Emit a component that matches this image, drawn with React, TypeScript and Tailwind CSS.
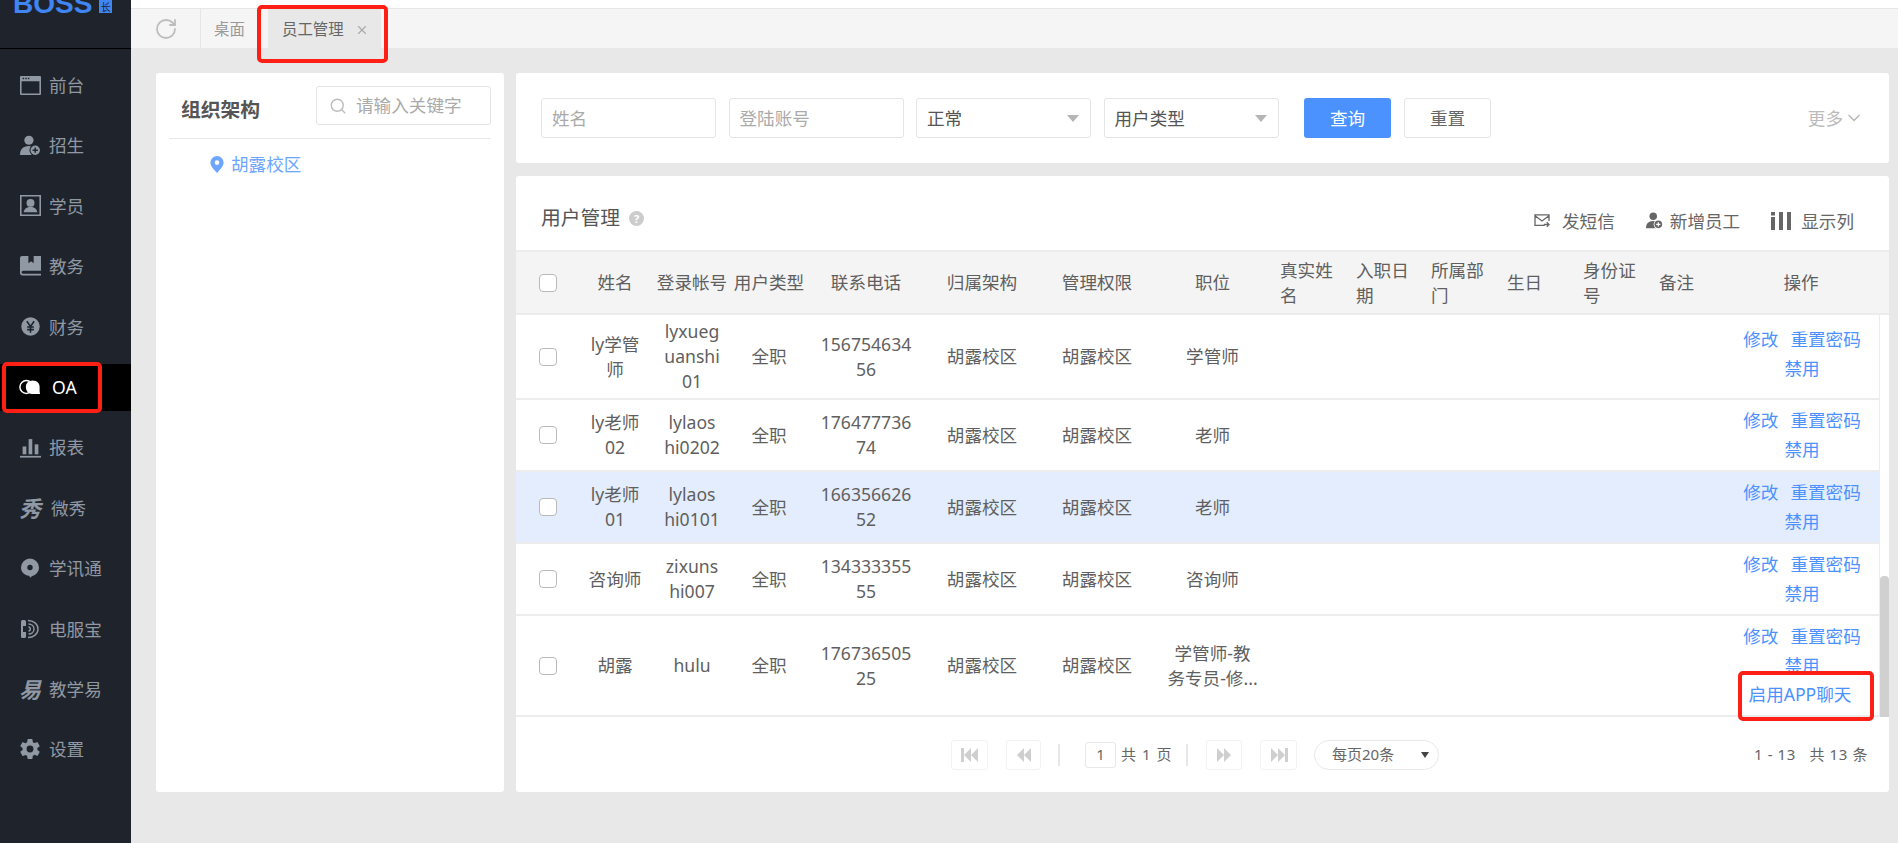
import React from 'react';
import { IoSettingsSharp } from 'react-icons/io5';
import { X, ChevronDown, Search, RotateCw } from 'lucide-react';

const fontStack = 'font-["Noto_Sans","Noto_Sans_CJK_SC",sans-serif]';

const IconWindow = () => (
  <svg viewBox="0 0 20 20" className="size-[21px]" fill="currentColor">
    <path d="M1 1h18a1 1 0 0 1 1 1v16a1 1 0 0 1-1 1H1a1 1 0 0 1-1-1V2a1 1 0 0 1 1-1zm.5 5v11.5h17V6z" fillRule="evenodd" />
    <rect x="2.5" y="2.6" width="1.4" height="1.4" fill="#1f242c" />
    <rect x="5" y="2.6" width="1.4" height="1.4" fill="#1f242c" />
    <rect x="7.5" y="2.6" width="1.4" height="1.4" fill="#1f242c" />
  </svg>
);

const IconUserPlus = ({ bg = '#1f242c' }: { bg?: string }) => (
  <svg viewBox="0 0 20 20" className="size-[21px]" fill="currentColor">
    <circle cx="8.5" cy="5" r="4.4" />
    <path d="M0 19c0-5 2.500-8.500 8.500-8.500S17 14 17 19z" />
    <circle cx="14.500" cy="14.500" r="5.500" fill={bg} />
    <circle cx="14.500" cy="14.500" r="4.500" />
    <path d="M14.500 12v5M12 14.500h5" stroke={bg} strokeWidth="1.400" />
  </svg>
);

const IconPortrait = () => (
  <svg viewBox="0 0 20 20" className="size-[21px]" fill="currentColor">
    <path d="M0 0h20v20H0zm1.500 1.500v17h17v-17z" fillRule="evenodd" />
    <circle cx="10" cy="7.500" r="3.800" />
    <path d="M3.500 16.500c.5-3.500 3-5 6.500-5s6 1.500 6.500 5z" />
  </svg>
);

const IconBook = () => (
  <svg viewBox="0 0 20 20" className="size-[21px]" fill="currentColor">
    <path d="M2 0h18v14H3a1.500 1.500 0 0 0 0 3h17v1.500H2.500A2.500 2.500 0 0 1 0 16V2a2 2 0 0 1 2-2z" />
    <path d="M8 0h5v7l-2.500-2L8 7z" fill="#1f242c" />
  </svg>
);

const IconYen = () => (
  <svg viewBox="0 0 20 20" className="size-[21px]" fill="currentColor">
    <circle cx="10" cy="10" r="8.800" />
    <path d="M6.500 5l3.500 5 3.500-5M10 10v6M6.800 10.500h6.400M6.800 13h6.400" stroke="#1f242c" strokeWidth="1.500" fill="none" />
  </svg>
);

const IconChat = () => (
  <svg viewBox="0 0 24 18" className="h-[18px] w-[24px]">
    <ellipse cx="8" cy="9" rx="7" ry="7" fill="none" stroke="#fff" strokeWidth="1.600" />
    <path d="M15 2c4.500 0 7.500 3 7.500 7 0 2.500-.2 5.500.5 7.500H14c-4 0-6.500-3.500-6.500-7.500S10.500 2 15 2z" fill="#fff" />
  </svg>
);

const IconBars = () => (
  <svg viewBox="0 0 20 20" className="size-[21px]" fill="currentColor">
    <rect x="2.500" y="9" width="3.500" height="7.500" />
    <rect x="8.200" y="2" width="3.500" height="14.500" />
    <rect x="14" y="7" width="3.500" height="9.500" />
    <rect x="0" y="18" width="20" height="1.600" />
  </svg>
);

const IconBubble = () => (
  <svg viewBox="0 0 20 20" className="size-[20px]" fill="currentColor">
    <path d="M10 .5a9 9 0 0 1 9 9c0 4.500-3.500 8-7 8.500l-1.500 1.800-1.500-2C4 17 1 13.800 1 9.500a9 9 0 0 1 9-9zm0 6.300a2.700 2.700 0 1 0 0 5.400 2.700 2.700 0 0 0 0-5.400z" fillRule="evenodd" />
  </svg>
);

const IconPhoneWave = () => (
  <svg viewBox="0 0 20 20" className="size-[20px]" fill="none" stroke="currentColor">
    <rect x="1" y="1" width="5" height="18" rx="1.500" fill="currentColor" stroke="none" />
    <path d="M3 7h3.500v6H3z" fill="#1f242c" stroke="none" />
    <path d="M8 1.500c5.500 0 10 3.500 10 8.500s-4.500 8.500-10 8.500" strokeWidth="1.400" />
    <path d="M8.500 5c3 0 5.500 2 5.500 5s-2.500 5-5.500 5" strokeWidth="1.400" />
    <path d="M8.500 8c1 0 1.800.8 1.800 2s-.8 2-1.800 2" strokeWidth="1.400" />
  </svg>
);

const MENU = [
  { label: '前台', icon: <IconWindow /> },
  { label: '招生', icon: <IconUserPlus /> },
  { label: '学员', icon: <IconPortrait /> },
  { label: '教务', icon: <IconBook /> },
  { label: '财务', icon: <IconYen /> },
  { label: 'OA', icon: <IconChat />, active: true },
  { label: '报表', icon: <IconBars /> },
  { label: '微秀', icon: <span className="text-[22px] leading-none font-bold italic">秀</span>, wide: true },
  { label: '学讯通', icon: <IconBubble /> },
  { label: '电服宝', icon: <IconPhoneWave /> },
  { label: '教学易', icon: <span className="text-[22px] leading-none font-bold italic">易</span> },
  { label: '设置', icon: <IoSettingsSharp className="size-[22px]" /> },
];

const Sidebar = () => (
  <aside className="flex w-[131px] shrink-0 flex-col bg-[#1f242c]">
    <div className="h-[49px] shrink-0 overflow-hidden border-b border-black">
      <div className="-mt-[11px] ml-[13px] flex items-start gap-[7px]">
        <span className='font-["Liberation_Sans",sans-serif] text-[28px] leading-[30px] font-bold text-[#3f86f2]'>BOSS</span>
        <span className="mt-[11px] flex size-[13px] items-center justify-center bg-[#3f86f2] text-[10px] leading-none text-[#1f242c]">长</span>
      </div>
    </div>
    <nav className="flex flex-col pt-[6px] text-[17.6px] text-[#8f98a3]">
      {MENU.map((m) => (
        <div key={m.label} className="flex h-[60.4px] items-center">
          <div className={`flex h-[47px] w-full items-center pl-[19px] ${m.active ? 'bg-black text-white' : ''}`}>
            <span className="flex w-[22px] items-center justify-center">{m.icon}</span>
            <span className={m.active ? 'ml-[11px]' : m.wide ? 'ml-[10px]' : 'ml-[8px]'}>{m.label}</span>
          </div>
        </div>
      ))}
    </nav>
  </aside>
);

const TopBar = () => (
  <div className="shrink-0">
    <div className="h-[9px] border-b border-[#e6e6e6] bg-white" />
    <div className="flex h-[39px] items-stretch bg-[#f5f5f5] text-[15.400px]">
      <div className="flex w-[70px] items-center justify-center border-r border-[#e6e6e6]">
        <RotateCw className="size-[24px] text-[#bdbdbd]" strokeWidth={1.800} />
      </div>
      <div className="flex w-[67px] items-center pt-[2px] pl-[13px] text-[#999]">桌面</div>
      <div className="flex w-[113px] items-center gap-[11px] bg-[#e8e8e8] pt-[2px] pl-[14px] text-[#666]">
        员工管理
        <X className="size-[14px] text-[#aaa]" strokeWidth={2} />
      </div>
    </div>
  </div>
);

const OrgPanel = () => (
  <section className="w-[348px] shrink-0 rounded-[3px] bg-white px-[13px]">
    <div className="flex h-[66px] items-center justify-between border-b border-[#e8e8e8]">
      <h2 className="mt-[9px] pl-[12px] text-[19.800px] font-bold text-[#555]">组织架构</h2>
      <div className="flex h-[39px] w-[175px] items-center gap-[9px] rounded-[3px] border border-[#e4e4e4] pl-[12px] text-[17.600px] text-[#aaa]">
        <Search className="size-[18px] text-[#bbb]" strokeWidth={1.800} />
        请输入关键字
      </div>
    </div>
    <div className="flex items-center gap-[7px] pt-[12px] pl-[41px] text-[17.600px] text-[#6ea6ff]">
      <svg viewBox="0 0 14 18" className="h-[17px] w-[14px]" fill="currentColor">
        <path d="M7 0a7 7 0 0 1 7 7c0 4-4 8-7 11C4 15 0 11 0 7a7 7 0 0 1 7-7zm0 4.500a2.500 2.500 0 1 0 0 5 2.500 2.500 0 0 0 0-5z" fillRule="evenodd" />
      </svg>
      胡露校区
    </div>
  </section>
);

const Field = ({ text, select, dark }: { text: string; select?: boolean; dark?: boolean }) => (
  <div className={`flex h-[40px] w-[175px] items-center justify-between rounded-[3px] border border-[#e4e4e4] pr-[11px] pl-[10px] text-[17.600px] ${dark ? 'text-[#555]' : 'text-[#aaa]'}`}>
    {text}
    {select && <span className="h-0 w-0 border-x-[6px] border-t-[7px] border-x-transparent border-t-[#b5b5b5]" />}
  </div>
);

const FilterPanel = () => (
  <section className="flex h-[90px] shrink-0 items-center rounded-[3px] bg-white pr-[25px] pl-[25px] text-[17.600px]">
    <div className="flex gap-[12.500px]">
      <Field text="姓名" />
      <Field text="登陆账号" />
      <Field text="正常" select dark />
      <Field text="用户类型" select dark />
    </div>
    <button className="ml-[25.500px] h-[40px] w-[87px] rounded-[3px] bg-[#4c92ff] text-white">查询</button>
    <button className="ml-[13px] h-[40px] w-[87px] rounded-[3px] border border-[#e4e4e4] text-[#666]">重置</button>
    <div className="ml-auto flex items-center gap-[1px] text-[#bbb]">
      更多
      <ChevronDown className="size-[20px]" strokeWidth={2} />
    </div>
  </section>
);

// header and body are two tables, so the body can sit beside its scrollbar
const COLS = ['w-[61px]', 'w-[76px]', 'w-[78px]', 'w-[76px]', 'w-[118px]', 'w-[114px]', 'w-[116px]', 'w-[115px]', 'w-[76px]', 'w-[75px]', 'w-[76px]', 'w-[76px]', 'w-[76px]', 'w-[76px]'];

const ColGroup = ({ last }: { last: string }) => (
  <colgroup>
    {COLS.map((c, i) => <col key={i} className={c} />)}
    <col className={last} />
  </colgroup>
);

const Check = () => <span className="mx-auto block size-[18px] rounded-[4px] border border-[#b9b9b9] bg-white" />;

const HEAD: { t: string; cls: string }[] = [
  { t: '姓名', cls: 'px-[10px] text-center' },
  { t: '登录帐号', cls: 'px-0 text-center' },
  { t: '用户类型', cls: 'px-0 text-center' },
  { t: '联系电话', cls: 'px-[10px] text-center' },
  { t: '归属架构', cls: 'px-[10px] text-center' },
  { t: '管理权限', cls: 'px-[10px] text-center' },
  { t: '职位', cls: 'px-[10px] text-center' },
  { t: '真实姓名', cls: 'px-[10px] text-left' },
  { t: '入职日期', cls: 'px-[10px] text-left' },
  { t: '所属部门', cls: 'px-[10px] text-left' },
  { t: '生日', cls: 'px-[10px] text-left' },
  { t: '身份证号', cls: 'px-[10px] text-left' },
  { t: '备注', cls: 'px-[10px] text-left' },
  { t: '操作', cls: 'pr-[12px] text-center' },
];

const ROWS = [
  { name: 'ly学管师', account: 'lyxueguanshi01', phone: '15675463456', job: '学管师' },
  { name: 'ly老师02', account: 'lylaoshi0202', phone: '17647773674', job: '老师' },
  { name: 'ly老师01', account: 'lylaoshi0101', phone: '16635662652', job: '老师', hi: true },
  { name: '咨询师', account: 'zixunshi007', phone: '13433335555', job: '咨询师' },
  { name: '胡露', account: 'hulu', phone: '17673650525', job: <>学管师-教<br />务专员-修...</>, chat: true },
];

const UserTable = () => (
  <div className="text-[17.600px] leading-[25px] text-[#5f5f5f]">
    <table className="w-full table-fixed border-y-2 border-[#ececec] bg-[#f4f4f4]">
      <ColGroup last="w-[164px]" />
      <thead>
        <tr className="h-[63px]">
          <th className="pl-[3px] font-normal"><Check /></th>
          {HEAD.map((h) => (
            <th key={h.t} className={`font-normal ${h.cls}`}>{h.t}</th>
          ))}
        </tr>
      </thead>
    </table>
    <div className="flex">
      <table className="min-w-0 flex-1 table-fixed">
        <ColGroup last="w-[154px]" />
        <tbody>
          {ROWS.map((r, i) => (
            <tr key={i} className={`border-b-2 border-[#ececec] ${r.hi ? 'bg-[#e3edfd]' : ''}`}>
              <td className="pl-[3px]"><Check /></td>
              <td className="px-[10px] py-[4px] text-center break-all">{r.name}</td>
              <td className="px-[11px] py-[4px] text-center break-all">{r.account}</td>
              <td className="px-[10px] py-[4px] text-center">全职</td>
              <td className="px-[13px] py-[4px] text-center break-all">{r.phone}</td>
              <td className="px-[10px] py-[4px] text-center">胡露校区</td>
              <td className="px-[10px] py-[4px] text-center">胡露校区</td>
              <td className="px-[10px] py-[4px] text-center">{r.job}</td>
              <td colSpan={6} />
              <td className={`px-[8px] pt-[6px] text-center leading-[29px] text-[#4c92ff] ${i === 0 ? 'pb-[11px]' : 'pb-[6px]'}`}>
                <div><span className="mr-[12px]">修改</span>重置密码</div>
                <div>禁用</div>
                {r.chat && <div className="-ml-[4px]">启用APP聊天</div>}
              </td>
            </tr>
          ))}
        </tbody>
      </table>
      <div className="w-[10px] shrink-0 border-l border-[#ececec]">
        <div className="mt-[261px] h-[141px] rounded-t-[4px] bg-[#d0d0d0]" />
      </div>
    </div>
  </div>
);

const PageBtn = ({ d, w }: { d: string; w: string }) => (
  <span className={`flex h-[30px] ${w} items-center justify-center rounded-[3px] border border-[#f2f2f2]`}>
    <svg viewBox="0 0 20 16" className="h-[16px] w-[20px]" fill="#cfcfcf"><path d={d} /></svg>
  </span>
);

const Pager = () => (
  <div className="flex h-[75px] items-center text-[15px] text-[#666]">
    <div className="ml-[435px] flex items-center">
      <PageBtn w="w-[37px]" d="M1 1h3v14H1zM11 1v14L4 8zM18 1v14l-7-7z" />
      <span className="ml-[18px]"><PageBtn w="w-[35px]" d="M10 1v14L3 8zM17 1v14l-7-7z" /></span>
      <span className="mr-[25px] ml-[17px] h-[22px] w-[2px] bg-[#e8e8e8]" />
      <span className="flex h-[26px] w-[31px] items-center justify-center rounded-[3px] border border-[#e8e8e8]">1</span>
      <span className="ml-[5px] w-[46px] tracking-[1px] whitespace-nowrap">共 1 页</span>
      <span className="mr-[18px] ml-[19px] h-[22px] w-[2px] bg-[#e8e8e8]" />
      <PageBtn w="w-[36px]" d="M3 1v14l7-7zM10 1v14l7-7z" />
      <span className="ml-[18px]"><PageBtn w="w-[37px]" d="M2 1v14l7-7zM9 1v14l7-7zM16 1h3v14h-3z" /></span>
      <div className="ml-[17px] flex h-[30px] w-[125px] items-center justify-between rounded-full border border-[#e8e8e8] pr-[9px] pl-[17px]">
        每页20条
        <span className="h-0 w-0 border-x-[4px] border-t-[6px] border-x-transparent border-t-[#444]" />
      </div>
    </div>
    <div className="mr-[21px] ml-auto tracking-[0.6px]">1 - 13&nbsp;&nbsp; 共 13 条</div>
  </div>
);

const IconUserPlusSmall = () => (
  <span className="block size-[17px] [&>svg]:size-[17px]"><IconUserPlus bg="#fff" /></span>
);

const UserPanel = () => (
  <section className="flex min-w-0 flex-1 flex-col overflow-hidden rounded-[3px] bg-white">
    <div className="flex h-[74px] shrink-0 items-end justify-between pr-[35px] pb-[17px] pl-[25px] text-[17.600px] text-[#666]">
      <div className="flex items-center gap-[9px] text-[19.800px] leading-[30px] text-[#555]">
        用户管理
        <span className="flex size-[15px] items-center justify-center rounded-full bg-[#ccc] text-[11px] leading-none font-bold text-white">?</span>
      </div>
      <div className="-mb-[1px] flex items-center">
        <svg viewBox="0 0 18 16" className="h-[14px] w-[16px]" fill="none" stroke="#666" strokeWidth="1.500">
          <path d="M12 13H1V1h16v7M1 2l8 6 8-6M11 12h6M14.500 9.500 17 12l-2.500 2.500" />
        </svg>
        <span className="ml-[12px]">发短信</span>
        <span className="ml-[31px] text-[#666]"><IconUserPlusSmall /></span>
        <span className="ml-[7px]">新增员工</span>
        <svg viewBox="0 0 20 18" className="ml-[31px] h-[18px] w-[20px]" fill="#666">
          <rect x="0" y="0" width="4" height="3.500" /><rect x="0" y="5" width="4" height="13" />
          <rect x="8" y="0" width="4" height="18" /><rect x="16" y="0" width="4" height="18" />
        </svg>
        <span className="ml-[10px]">显示列</span>
      </div>
    </div>
    <UserTable />
    <Pager />
  </section>
);

export default function App() {
  return (
    <div className={`relative flex h-[843px] w-full overflow-hidden bg-[#e8e8e8] ${fontStack}`}>
      <Sidebar />
      <main className="flex min-w-0 flex-1 flex-col">
        <TopBar />
        <div className="flex h-[744px] gap-[12px] pt-[25px] pr-[9px] pl-[25px]">
          <OrgPanel />
          <div className="flex min-w-0 flex-1 flex-col gap-[13px]">
            <FilterPanel />
            <UserPanel />
          </div>
        </div>
      </main>
      {/* red annotation boxes drawn over the page */}
      <div className="absolute top-[5px] left-[257px] h-[58px] w-[131px] rounded-[5px] border-[4px] border-[#ff2015]" />
      <div className="absolute top-[362px] left-[2px] h-[51px] w-[100px] rounded-[5px] border-[4px] border-[#ff2015]" />
      <div className="absolute top-[671px] left-[1738px] h-[50px] w-[136px] rounded-[5px] border-[4px] border-[#ff2015]" />
    </div>
  );
}
